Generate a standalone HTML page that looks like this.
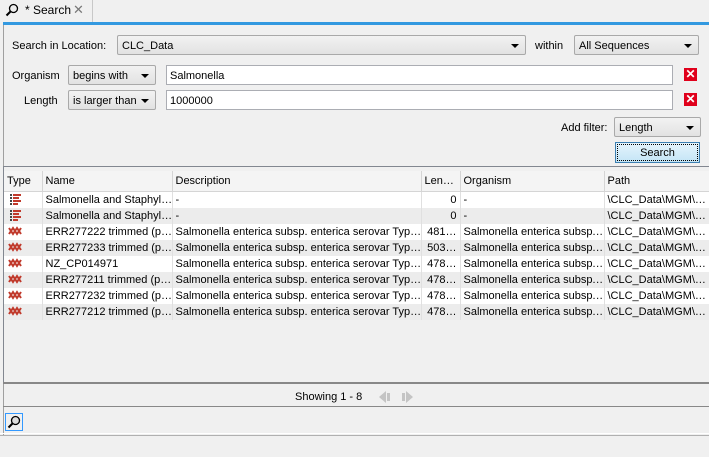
<!DOCTYPE html>
<html><head><style>
*{box-sizing:border-box;margin:0;padding:0}
body{width:709px;height:457px;background:#f0f0f0;font:11px "Liberation Sans",sans-serif;color:#000;position:relative;overflow:hidden}
.a{position:absolute}
.combo{position:absolute;height:20px;border:1px solid #a9a9a9;border-radius:2px;background:linear-gradient(#f2f2f2,#e2e2e2);padding:4px 4px 0;white-space:nowrap}
.combo:after{content:"";position:absolute;right:6px;top:8px;border-left:4px solid transparent;border-right:4px solid transparent;border-top:4px solid #000}
.inp{position:absolute;height:20px;border:1px solid #abadb3;background:#fff;padding:4px 3px 0}
.x{position:absolute;width:13px;height:13px;background:#e0001b;color:#fff;font-weight:bold;font-size:12px;line-height:13px;text-align:center}
table{border-collapse:collapse;table-layout:fixed;position:absolute;left:4px;top:171px;width:705px}
td,th{height:16px;padding:1px 3px 0;white-space:nowrap;overflow:hidden;font-weight:normal;text-align:left;border-right:1px solid #e0e0e0}
th{height:20px;border-right:1px solid #d5d5d5;border-bottom:1px solid #d5d5d5;background:#f4f4f4}
tbody tr td{background:#fff}
tbody tr:nth-child(even) td{background:#ececec}
.r{text-align:right}
</style></head><body>
<div class="a" style="left:0;top:0;width:93px;height:22px;border-right:1px solid #c8c8c8;background:#f0f0f0"></div>
<svg class="a" style="left:5px;top:3px" width="14" height="14" viewBox="0 0 14 14"><circle cx="8.5" cy="5.5" r="4" fill="#eee" stroke="#000" stroke-width="1.3"/><path d="M5.5 8.5L1.5 12.5" stroke="#000" stroke-width="2"/></svg>
<div class="a" style="left:25px;top:3px;font-size:12px">* Search</div>
<div class="a" style="left:73px;top:2px;font-size:13px;color:#777">✕</div>
<div class="a" style="left:3px;top:22px;width:706px;height:3px;background:#3399e0"></div>
<div class="a" style="left:3px;top:25px;width:1px;height:410px;background:#a0a0a0"></div>
<div class="a" style="left:12px;top:40px">Search in Location:</div>
<div class="combo" style="left:117px;top:35px;width:409px">CLC_Data</div>
<div class="a" style="left:535px;top:40px">within</div>
<div class="combo" style="left:574px;top:35px;width:125px">All Sequences</div>
<div class="a" style="left:12px;top:70px">Organism</div>
<div class="combo" style="left:68px;top:65px;width:88px">begins with</div>
<div class="inp" style="left:166px;top:65px;width:507px">Salmonella</div>
<div class="x" style="left:684px;top:68px">✕</div>
<div class="a" style="left:24px;top:95px">Length</div>
<div class="combo" style="left:68px;top:90px;width:88px">is larger than</div>
<div class="inp" style="left:166px;top:90px;width:507px">1000000</div>
<div class="x" style="left:684px;top:93px">✕</div>
<div class="a" style="left:561px;top:122px">Add filter:</div>
<div class="combo" style="left:614px;top:117px;width:87px">Length</div>
<div class="a" style="left:615px;top:142px;width:85px;height:21px;border:1px solid #3c7fb1;background:linear-gradient(#e5f4fc,#c4e5f6);text-align:center;padding-top:4px;outline:1px dotted #000;outline-offset:-3px">Search</div>
<div class="a" style="left:3px;top:166px;width:706px;height:217px;border:1px solid #828790;border-right:none;background:#f0f0f0"></div>
<table>
<colgroup><col style="width:38px"><col style="width:130px"><col style="width:249px"><col style="width:39px"><col style="width:144px"><col style="width:105px"></colgroup>
<thead><tr><th>Type</th><th>Name</th><th>Description</th><th>Len…</th><th>Organism</th><th>Path</th></tr></thead>
<tbody>
<tr><td><svg width="16" height="12"><g fill="#c0392b"><rect x="3" y="1" width="2" height="2" fill="#444"/><rect x="6" y="1" width="8" height="2"/><rect x="3" y="4" width="2" height="2" fill="#444"/><rect x="6" y="4" width="6" height="2"/><rect x="3" y="7" width="2" height="2" fill="#444"/><rect x="6" y="7" width="8" height="2"/><rect x="3" y="10" width="2" height="2" fill="#444"/><rect x="6" y="10" width="5" height="2"/></g></svg></td><td>Salmonella and Staphyl…</td><td>-</td><td class="r">0</td><td>-</td><td>\CLC_Data\MGM\…</td></tr>
<tr><td><svg width="16" height="12"><g fill="#c0392b"><rect x="3" y="1" width="2" height="2" fill="#444"/><rect x="6" y="1" width="8" height="2"/><rect x="3" y="4" width="2" height="2" fill="#444"/><rect x="6" y="4" width="6" height="2"/><rect x="3" y="7" width="2" height="2" fill="#444"/><rect x="6" y="7" width="8" height="2"/><rect x="3" y="10" width="2" height="2" fill="#444"/><rect x="6" y="10" width="5" height="2"/></g></svg></td><td>Salmonella and Staphyl…</td><td>-</td><td class="r">0</td><td>-</td><td>\CLC_Data\MGM\…</td></tr>
<tr><td><svg width="16" height="10"><path d="M2 2L6 8L10 2L14 8M2 8L6 2L10 8L14 2" stroke="#c0392b" stroke-width="2" fill="none"/></svg></td><td>ERR277222 trimmed (p…</td><td>Salmonella enterica subsp. enterica serovar Typ…</td><td class="r">481…</td><td>Salmonella enterica subsp.…</td><td>\CLC_Data\MGM\…</td></tr>
<tr><td><svg width="16" height="10"><path d="M2 2L6 8L10 2L14 8M2 8L6 2L10 8L14 2" stroke="#c0392b" stroke-width="2" fill="none"/></svg></td><td>ERR277233 trimmed (p…</td><td>Salmonella enterica subsp. enterica serovar Typ…</td><td class="r">503…</td><td>Salmonella enterica subsp.…</td><td>\CLC_Data\MGM\…</td></tr>
<tr><td><svg width="16" height="10"><path d="M2 2L6 8L10 2L14 8M2 8L6 2L10 8L14 2" stroke="#c0392b" stroke-width="2" fill="none"/></svg></td><td>NZ_CP014971</td><td>Salmonella enterica subsp. enterica serovar Typ…</td><td class="r">478…</td><td>Salmonella enterica subsp.…</td><td>\CLC_Data\MGM\…</td></tr>
<tr><td><svg width="16" height="10"><path d="M2 2L6 8L10 2L14 8M2 8L6 2L10 8L14 2" stroke="#c0392b" stroke-width="2" fill="none"/></svg></td><td>ERR277211 trimmed (p…</td><td>Salmonella enterica subsp. enterica serovar Typ…</td><td class="r">478…</td><td>Salmonella enterica subsp.…</td><td>\CLC_Data\MGM\…</td></tr>
<tr><td><svg width="16" height="10"><path d="M2 2L6 8L10 2L14 8M2 8L6 2L10 8L14 2" stroke="#c0392b" stroke-width="2" fill="none"/></svg></td><td>ERR277232 trimmed (p…</td><td>Salmonella enterica subsp. enterica serovar Typ…</td><td class="r">478…</td><td>Salmonella enterica subsp.…</td><td>\CLC_Data\MGM\…</td></tr>
<tr><td><svg width="16" height="10"><path d="M2 2L6 8L10 2L14 8M2 8L6 2L10 8L14 2" stroke="#c0392b" stroke-width="2" fill="none"/></svg></td><td>ERR277212 trimmed (p…</td><td>Salmonella enterica subsp. enterica serovar Typ…</td><td class="r">478…</td><td>Salmonella enterica subsp.…</td><td>\CLC_Data\MGM\…</td></tr>
</tbody></table>
<div class="a" style="left:3px;top:382px;width:706px;height:2px;background:#888"></div>
<div class="a" style="left:295px;top:391px">Showing 1 - 8</div>
<svg class="a" style="left:378px;top:390px" width="40" height="14"><path d="M1 7L8 1V13Z M9 3h3v8h-3z" fill="#c4c4c4"/><path d="M24 3h3v8h-3z M28 1L35 7L28 13Z" fill="#c4c4c4"/></svg>
<div class="a" style="left:3px;top:406px;width:706px;height:1px;background:#888"></div>
<div class="a" style="left:5px;top:413px;width:18px;height:18px;border:1px solid #3399ff"></div>
<svg class="a" style="left:7px;top:415px" width="14" height="14" viewBox="0 0 14 14"><circle cx="8.5" cy="5.5" r="4" fill="#ddd" stroke="#000" stroke-width="1.3"/><path d="M5.5 8.5L1.5 12.5" stroke="#000" stroke-width="2"/></svg>
<div class="a" style="left:0;top:433px;width:709px;height:1px;background:#fff"></div>
<div class="a" style="left:0;top:435px;width:709px;height:1px;background:#b0b0b0"></div>
</body></html>
